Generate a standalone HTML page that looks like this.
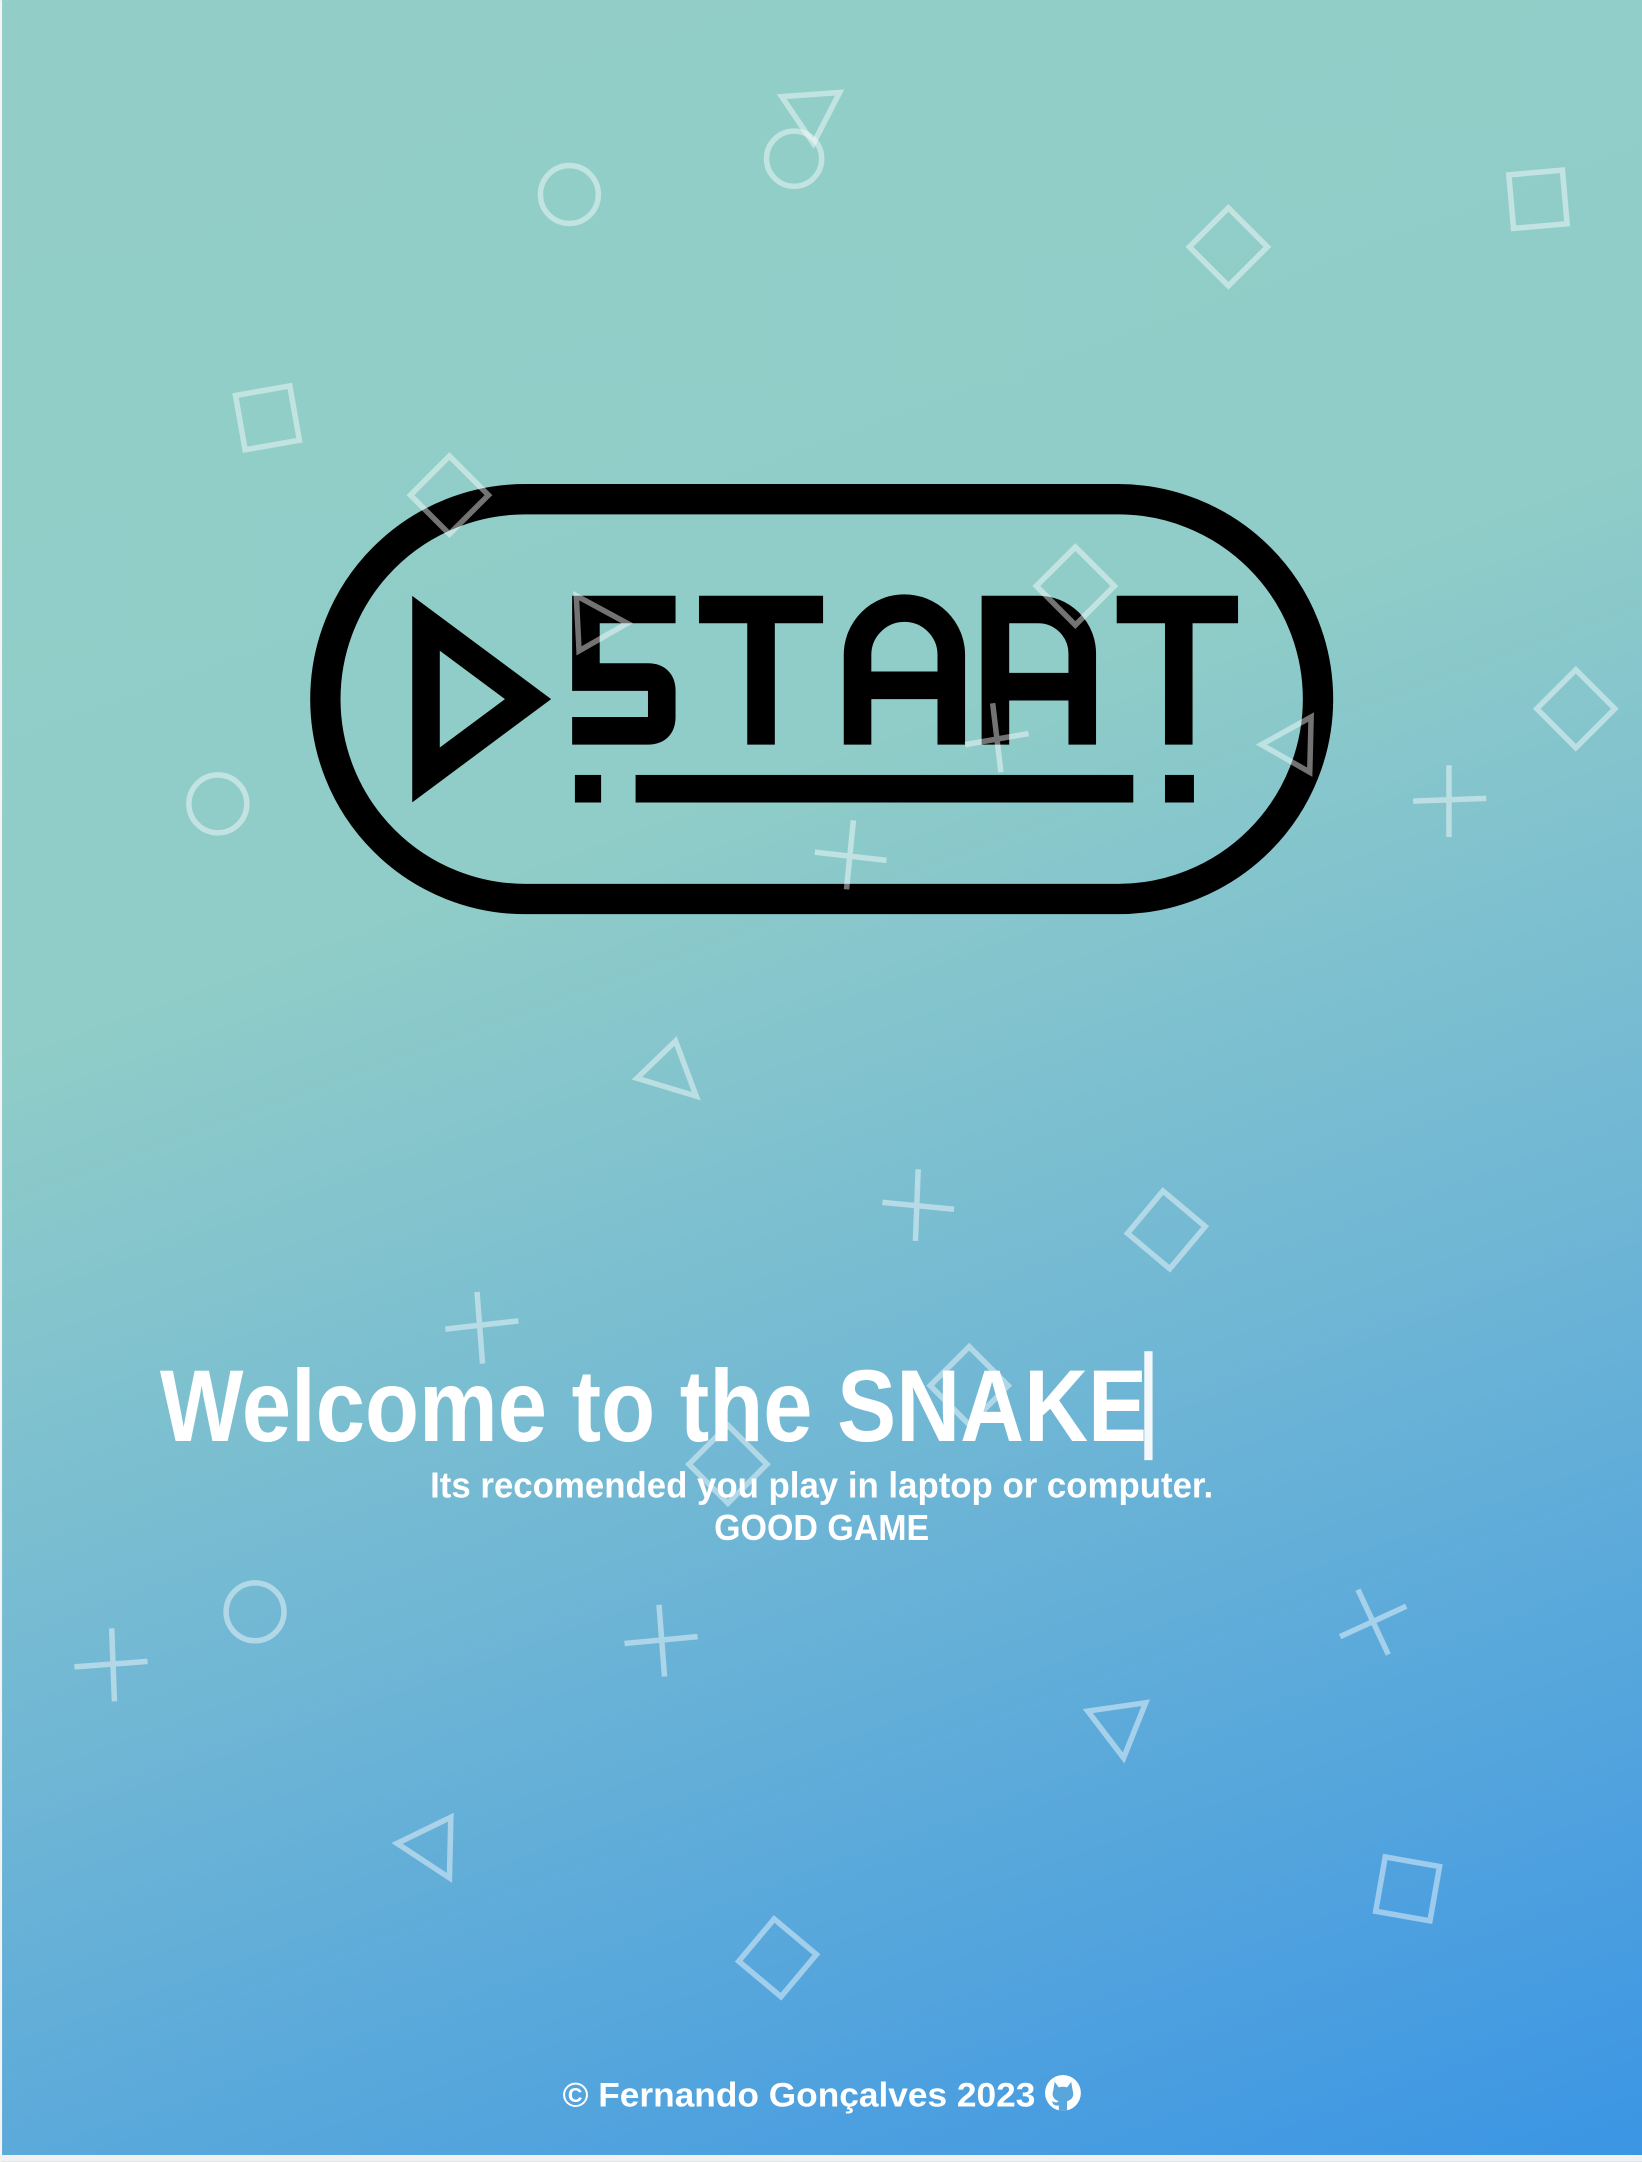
<!DOCTYPE html>
<html><head><meta charset="utf-8"><style>
html,body{margin:0;padding:0;width:1642px;height:2162px;overflow:hidden}
body{background:linear-gradient(160deg,#92cec7 0%,#90cdc8 38%,#6fb6d5 65%,#3b95e4 100%)}
svg{display:block}
text{font-family:"Liberation Sans",sans-serif;font-weight:bold;fill:#fff}
</style></head><body>
<svg width="1642" height="2162" viewBox="0 0 1191 1568" xmlns="http://www.w3.org/2000/svg">
<rect x="0" y="0" width="1.5" height="1568" fill="#f4f4f4"/>
<rect x="0" y="1563" width="1191" height="5" fill="#f1f1f1"/>
<!-- logo -->
<g fill="none" stroke="#000" stroke-width="22">
<rect x="236" y="362" width="720" height="290" rx="145"/>
</g>
<g fill="none" stroke="#000" stroke-width="20">
<polygon points="309,452 383,507 309,562" stroke-linejoin="miter"/>
<path d="M490 442 H425 V491 H470 Q480 491 480 501 V520 Q480 530 470 530 H415"/>
<path d="M507 442 H597 M552 442 V540"/>
<path d="M622 540 V475 A34 34 0 0 1 690 475 V540 M622 497 H690"/>
<path d="M722 540 V442 H753 A32 32 0 0 1 785 474 V540 M722 498 H785"/>
<path d="M810 442 H898 M855 442 V540"/>
</g>
<g fill="#000">
<rect x="417" y="562" width="19" height="20"/>
<rect x="461" y="562" width="361" height="20"/>
<rect x="845" y="562" width="21" height="20"/>
</g>
<!-- shapes -->
<g fill="none" stroke="#fff" stroke-opacity="0.45" stroke-width="4">
<circle cx="413" cy="141" r="21"/>
<circle cx="576" cy="115" r="20"/>
<polygon points="567,70 609,67 590,104"/>
<rect x="871" y="159" width="40" height="40" transform="rotate(45 891 179)"/>
<rect x="1096" y="125" width="39" height="39" transform="rotate(-5 1115 144)"/>
<rect x="174" y="283" width="40" height="40" transform="rotate(-10 194 303)"/>
<rect x="306" y="339" width="40" height="40" transform="rotate(45 326 359)"/>
<rect x="760" y="405" width="40" height="40" transform="rotate(45 780 425)"/>
<polygon points="418,432 455,452 420,472"/>
<path d="M700 540 L746 532 M720 510 L726 560"/>
<polygon points="951,520 950,560 915,540"/>
<rect x="1123" y="494" width="40" height="40" transform="rotate(45 1143 514)"/>
<path d="M1025 581 L1078 579 M1051 555 L1051 607"/>
<circle cx="158" cy="583" r="21"/>
<path d="M591 618 L643 624 M619 595 L614 645"/>
<polygon points="462,782 490,755 505,795"/>
<path d="M640 872 L692 877 M666 848 L664 900"/>
<rect x="826" y="872" width="40" height="40" transform="rotate(40 846 892)"/>
<path d="M323 964 L376 958 M346 937 L350 989"/>
<rect x="683" y="985" width="40" height="40" transform="rotate(45 703 1005)"/>
<rect x="508" y="1042" width="40" height="40" transform="rotate(45 528 1062)"/>
<circle cx="185" cy="1169" r="21"/>
<path d="M54 1209 L107 1205 M81 1181 L83 1234"/>
<path d="M453 1192 L506 1187 M478 1164 L482 1216"/>
<path d="M972 1187 L1020 1165 M985 1153 L1007 1200"/>
<polygon points="789,1241 831,1235 815,1275"/>
<polygon points="288,1337 327,1318 326,1362"/>
<rect x="1001" y="1350" width="40" height="40" transform="rotate(10 1021 1370)"/>
<rect x="544" y="1400" width="40" height="40" transform="rotate(40 564 1420)"/>
</g>
<!-- text -->
<text x="116" y="1045" font-size="74" textLength="716" lengthAdjust="spacingAndGlyphs">Welcome to the SNAKE</text>
<rect x="830" y="980" width="6" height="79" fill="#f4f8fb"/>
<text x="312" y="1086" font-size="26" textLength="568" lengthAdjust="spacingAndGlyphs">Its recomended you play in laptop or computer.</text>
<text x="518" y="1117" font-size="26" textLength="156" lengthAdjust="spacingAndGlyphs">GOOD GAME</text>
<text x="408" y="1528" font-size="25" textLength="343" lengthAdjust="spacingAndGlyphs">© Fernando Gonçalves 2023</text>
<g transform="translate(771 1518)">
<circle r="13" fill="#fff"/>
<path d="M-6 -8 L-3 -4 Q0 -5 3 -4 L6 -8 L7 -2 Q9 4 3 6 L3 13 L-3 13 L-3 9 Q-7 10 -8 6 L-5 7 L-3 6 Q-9 4 -7 -2 Z" fill="#58a6dc"/>
</g>
</svg>
</body></html>
